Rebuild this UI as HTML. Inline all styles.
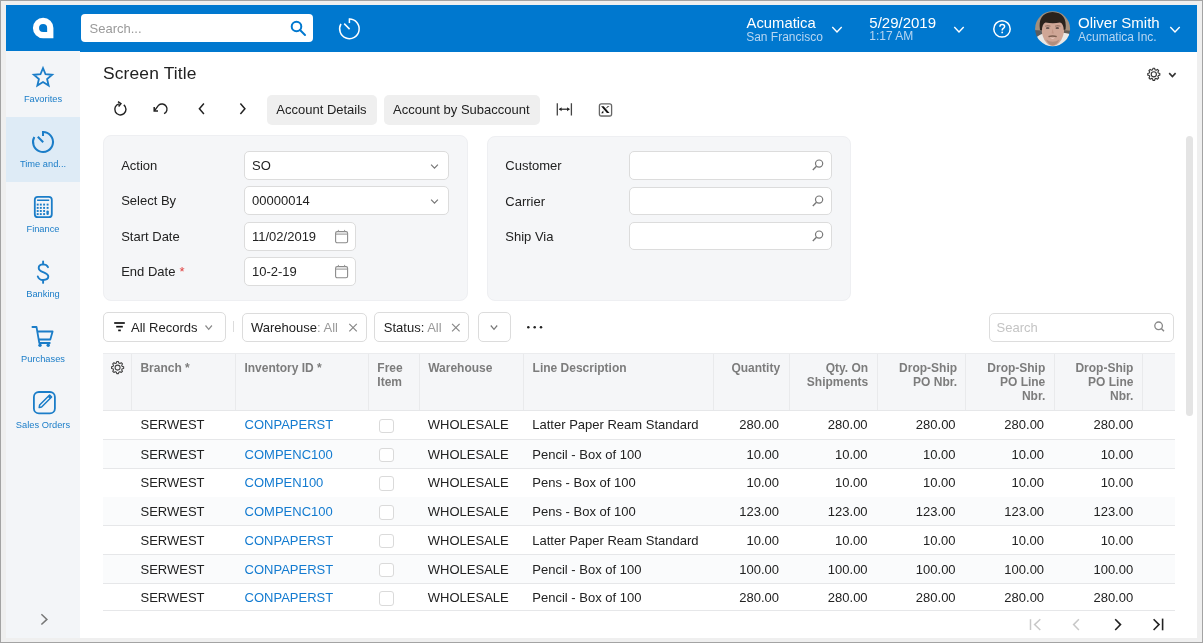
<!DOCTYPE html>
<html><head><meta charset="utf-8">
<style>
*{box-sizing:border-box;margin:0;padding:0}
html,body{width:1203px;height:643px;overflow:hidden;background:#efefef;font-family:"Liberation Sans",sans-serif;color:#222;position:relative;-webkit-font-smoothing:antialiased}
.b{position:absolute}
.s{position:absolute;overflow:visible}
.t{position:absolute;white-space:nowrap}
#w{position:absolute;left:0;top:0;width:1203px;height:643px;will-change:transform}
</style></head><body><div id="w">
<div class="b" style="left:0.00px;top:0.00px;width:1203.00px;height:1.00px;background:#a3a3a3"></div>
<div class="b" style="left:0.00px;top:0.00px;width:1.00px;height:643.00px;background:#a3a3a3"></div>
<div class="b" style="left:1202.00px;top:0.00px;width:1.00px;height:643.00px;background:#a3a3a3"></div>
<div class="b" style="left:0.00px;top:642.00px;width:1203.00px;height:1.00px;background:#a3a3a3"></div>
<div class="b" style="left:6.00px;top:5.00px;width:1191.00px;height:633.00px;background:#fff"></div>
<div class="b" style="left:6.00px;top:5.00px;width:1191.00px;height:46.50px;background:#0078cf"></div>
<svg class="s" style="left:30.00px;top:15.00px;" width="26" height="26" viewBox="0 0 26 26"><path d="M13.15 2.85 A10.25 10.25 0 0 0 2.9 13.1 A10.25 10.25 0 0 0 13.15 23.35 L23.4 23.35 L23.4 13.1 A10.25 10.25 0 0 0 13.15 2.85 Z M13.1 9 A4.05 4.05 0 0 0 9.05 13.05 A4.05 4.05 0 0 0 13.1 17.1 L17.15 17.1 L17.15 13.05 A4.05 4.05 0 0 0 13.1 9 Z" fill="#fff" fill-rule="evenodd"/></svg>
<div class="b" style="left:80.50px;top:14.20px;width:232.50px;height:28.30px;background:#fff;border-radius:4px"></div>
<div class="t" style="left:89.50px;top:22px;font-size:13px;line-height:13px;color:#9a9a9a;">Search...</div>
<svg class="s" style="left:286.00px;top:17.00px;" width="24" height="24" viewBox="0 0 24 24"><circle cx="10.5" cy="9.5" r="4.8" fill="none" stroke="#0078cf" stroke-width="2"/><path d="M14 13 L19 18" stroke="#0078cf" stroke-width="2" stroke-linecap="round"/></svg>
<svg class="s" style="left:335.00px;top:15.00px;" width="28" height="28" viewBox="0 0 28 28"><path d="M14.40 4.10 A9.75 9.75 0 1 1 5.96 8.97" fill="none" stroke="#fff" stroke-width="1.5"/><path d="M14.40 3.35 L14.40 8.10" stroke="#fff" stroke-width="1.5"/><path d="M14.60 14.10 L9.20 8.65" stroke="#fff" stroke-width="1.5"/></svg>
<div class="t" style="left:746.60px;top:16px;font-size:14.8px;line-height:14.8px;color:#fff;">Acumatica</div>
<div class="t" style="left:746.20px;top:31px;font-size:12px;line-height:12px;color:#b7d6f2;">San Francisco</div>
<svg class="s" style="left:827.00px;top:20.00px;" width="20" height="20" viewBox="0 0 20 20"><path d="M5.30 7.10 L10.00 12.10 L14.70 7.10" fill="none" stroke="#fff" stroke-width="1.4"/></svg>
<div class="t" style="left:869.30px;top:15px;font-size:15px;line-height:15px;color:#fff;">5/29/2019</div>
<div class="t" style="left:869.30px;top:30px;font-size:12px;line-height:12px;color:#b7d6f2;">1:17 AM</div>
<svg class="s" style="left:949.00px;top:20.00px;" width="20" height="20" viewBox="0 0 20 20"><path d="M5.30 7.10 L10.00 12.10 L14.70 7.10" fill="none" stroke="#fff" stroke-width="1.4"/></svg>
<svg class="s" style="left:990.00px;top:16.00px;" width="24" height="24" viewBox="0 0 24 24"><circle cx="12" cy="12.9" r="8.2" fill="none" stroke="#fff" stroke-width="1.5"/><path d="M9.9 10.7 C9.9 9.2 10.9 8.5 12.2 8.5 C13.6 8.5 14.6 9.3 14.6 10.5 C14.6 11.7 13.7 12.1 13 12.6 C12.4 13.1 12.2 13.5 12.2 14.5" fill="none" stroke="#fff" stroke-width="1.5"/><circle cx="12.2" cy="16.4" r="0.9" fill="#fff"/></svg>
<svg class="s" style="left:1035.00px;top:11.00px;" width="36" height="36" viewBox="0 0 36 36"><defs><clipPath id="av"><circle cx="17.6" cy="17.75" r="17.5"/></clipPath><filter id="bl" x="-20%" y="-20%" width="140%" height="140%"><feGaussianBlur stdDeviation="0.7"/></filter></defs><g clip-path="url(#av)"><g filter="url(#bl)"><rect x="-2" y="-2" width="40" height="40" fill="#a38f7c"/><path d="M-2 19 L7 19.5 L7.5 26 L-2 27 Z" fill="#5a5c5e"/><path d="M28 19 L38 20 L38 24 L28 23.5 Z" fill="#625a52"/><path d="M-2 40 L-2 30 Q2 24.5 8 22.5 L27 21.5 Q33 22 38 24 L38 40 Z" fill="#e9e8e6"/><path d="M7 13 Q8 9.5 17.8 9.5 Q28 9.5 28.8 13 L29 21 Q27.5 30 21.5 34 Q17.8 35.8 14 34 Q8.2 30 6.8 21 Z" fill="#cfa696"/><path d="M10 14.8 Q12.7 13.8 15.5 14.8 L15.5 15.6 Q12.7 14.8 10 15.6 Z M20 14.8 Q22.7 13.8 25.5 14.8 L25.5 15.6 Q22.7 14.8 20 15.6 Z" fill="#7a5a4e" opacity="0.8"/><path d="M5 19 Q2.5 2 17.5 1 Q32.5 1.5 30.5 18.5 L28.8 19 Q28.5 12.5 25 11.5 Q18 13 10.5 11.5 Q7 13 7 19.5 Z" fill="#29221f"/><ellipse cx="12.7" cy="17" rx="1.8" ry="0.85" fill="#4a3a36"/><ellipse cx="22.3" cy="17" rx="1.8" ry="0.85" fill="#4a3a36"/><path d="M17.6 17.5 L16.6 22.5 L18.8 22.5 Z" fill="#c29585"/><path d="M13.2 25 Q17.6 23.4 22 25 L21.4 26.2 Q17.6 25.2 13.8 26.2 Z" fill="#7d5e50"/><path d="M14.6 26.3 Q17.6 27.8 20.6 26.3 Q17.6 29.2 14.6 26.3 Z" fill="#f0d5cc"/><path d="M11 28.5 Q17.6 33 24.5 28.5 Q22 34 17.6 34.5 Q13.5 34 11 28.5 Z" fill="#9a7a6a" opacity="0.55"/></g></g></svg>
<div class="t" style="left:1078.00px;top:15px;font-size:15px;line-height:15px;color:#fff;">Oliver Smith</div>
<div class="t" style="left:1078.00px;top:31px;font-size:12px;line-height:12px;color:#b7d6f2;">Acumatica Inc.</div>
<svg class="s" style="left:1165.00px;top:20.00px;" width="20" height="20" viewBox="0 0 20 20"><path d="M5.30 7.10 L10.00 12.10 L14.70 7.10" fill="none" stroke="#fff" stroke-width="1.4"/></svg>
<div class="b" style="left:6.00px;top:51.00px;width:74.00px;height:587.00px;background:#f3f5f8"></div>
<div class="b" style="left:6.00px;top:117.00px;width:74.00px;height:64.50px;background:#deebf6"></div>
<div class="t" style="left:6.00px;width:74px;text-align:center;top:95px;font-size:9.3px;line-height:9.3px;color:#1b7dc8;">Favorites</div>
<div class="t" style="left:6.00px;width:74px;text-align:center;top:160px;font-size:9.3px;line-height:9.3px;color:#1b7dc8;">Time and...</div>
<div class="t" style="left:6.00px;width:74px;text-align:center;top:225px;font-size:9.3px;line-height:9.3px;color:#1b7dc8;">Finance</div>
<div class="t" style="left:6.00px;width:74px;text-align:center;top:290px;font-size:9.3px;line-height:9.3px;color:#1b7dc8;">Banking</div>
<div class="t" style="left:6.00px;width:74px;text-align:center;top:355px;font-size:9.3px;line-height:9.3px;color:#1b7dc8;">Purchases</div>
<div class="t" style="left:6.00px;width:74px;text-align:center;top:421px;font-size:9.3px;line-height:9.3px;color:#1b7dc8;">Sales Orders</div>
<svg class="s" style="left:30.00px;top:64.00px;" width="26" height="26" viewBox="0 0 26 26"><path d="M13.00 4.10 L15.53 10.22 L22.13 10.73 L17.09 15.03 L18.64 21.47 L13.00 18.00 L7.36 21.47 L8.91 15.03 L3.87 10.73 L10.47 10.22 Z" fill="none" stroke="#1b7dc8" stroke-width="1.8" stroke-linejoin="miter"/></svg>
<svg class="s" style="left:29.00px;top:128.00px;" width="28" height="28" viewBox="0 0 28 28"><path d="M14.00 4.00 A10 10 0 1 1 5.34 9.00" fill="none" stroke="#1b7dc8" stroke-width="2"/><path d="M14.00 3.00 L14.00 8.00" stroke="#1b7dc8" stroke-width="2"/><path d="M14.20 14.25 L8.80 8.80" stroke="#1b7dc8" stroke-width="2"/></svg>
<svg class="s" style="left:30.00px;top:193.00px;" width="26" height="28" viewBox="0 0 26 28"><rect x="4.8" y="3.8" width="17" height="20.4" rx="3" fill="none" stroke="#1b7dc8" stroke-width="1.8"/><rect x="7.1" y="6.5" width="12.1" height="1.5" fill="#1b7dc8"/><rect x="6.75" y="10.65" width="1.9" height="1.9" fill="#1b7dc8"/><rect x="9.85" y="10.65" width="1.9" height="1.9" fill="#1b7dc8"/><rect x="13.15" y="10.65" width="1.9" height="1.9" fill="#1b7dc8"/><rect x="16.65" y="10.65" width="1.9" height="1.9" fill="#1b7dc8"/><rect x="6.75" y="13.95" width="1.9" height="1.9" fill="#1b7dc8"/><rect x="9.85" y="13.95" width="1.9" height="1.9" fill="#1b7dc8"/><rect x="13.15" y="13.95" width="1.9" height="1.9" fill="#1b7dc8"/><rect x="16.65" y="13.95" width="1.9" height="1.9" fill="#1b7dc8"/><rect x="6.75" y="17.05" width="1.9" height="1.9" fill="#1b7dc8"/><rect x="9.85" y="17.05" width="1.9" height="1.9" fill="#1b7dc8"/><rect x="13.15" y="17.05" width="1.9" height="1.9" fill="#1b7dc8"/><rect x="6.75" y="20.15" width="1.9" height="1.9" fill="#1b7dc8"/><rect x="9.85" y="20.15" width="1.9" height="1.9" fill="#1b7dc8"/><rect x="13.15" y="20.15" width="1.9" height="1.9" fill="#1b7dc8"/><rect x="16.4" y="17.4" width="2.4" height="4.6" rx="1.2" fill="#1b7dc8"/></svg>
<svg class="s" style="left:31.00px;top:257.00px;" width="24" height="30" viewBox="0 0 24 30"><path d="M17 10.2 C16 8.2 14.2 7.4 12.1 7.4 C9.4 7.4 7.7 9 7.7 11 C7.7 13.4 9.8 14.2 12.2 15.2 C15 16.3 17.3 17.3 17.3 19.6 C17.3 21.6 15.2 23 12.2 23 C9.6 23 7.6 21.8 6.8 19.5" fill="none" stroke="#1b7dc8" stroke-width="1.9" stroke-linecap="round"/><path d="M12.1 4.4 L12.1 7.4 M12.1 23 L12.1 25.9" stroke="#1b7dc8" stroke-width="1.9" stroke-linecap="round"/></svg>
<svg class="s" style="left:30.00px;top:324.00px;" width="26" height="26" viewBox="0 0 26 26"><path d="M2.4 3 L6.5 3 L9.3 19 L19.8 19" fill="none" stroke="#1b7dc8" stroke-width="1.8" stroke-linejoin="round" stroke-linecap="round"/><path d="M7.3 7.5 L22.6 7.5 L20.3 15.5 L8.6 15.5" fill="none" stroke="#1b7dc8" stroke-width="1.8" stroke-linejoin="round"/><circle cx="10" cy="21.3" r="1.7" fill="#1b7dc8"/><circle cx="18.2" cy="21.3" r="1.7" fill="#1b7dc8"/></svg>
<svg class="s" style="left:30.00px;top:388.00px;" width="28" height="28" viewBox="0 0 28 28"><rect x="3.9" y="4" width="21" height="21.4" rx="5" fill="none" stroke="#1b7dc8" stroke-width="1.8"/><path d="M9.2 19.6 L9.6 17 L19.6 7 L21.6 9 L11.6 19 Z" fill="none" stroke="#1b7dc8" stroke-width="1.5" stroke-linejoin="round"/><path d="M18.6 8 L20.6 10" stroke="#1b7dc8" stroke-width="2.4"/></svg>
<svg class="s" style="left:36.00px;top:610.00px;" width="16" height="18" viewBox="0 0 16 18"><path d="M5.4 4.3 L10.9 9.4 L5.4 14.5" fill="none" stroke="#777" stroke-width="1.5"/></svg>
<div class="t" style="left:103.00px;top:65px;font-size:17.4px;line-height:17.4px;color:#222;letter-spacing:0.15px;">Screen Title</div>
<svg class="s" style="left:1144.00px;top:64.00px;" width="20" height="20" viewBox="0 0 20 20"><path d="M8.58 5.76 L8.95 4.26 L10.65 4.26 L11.02 5.76 L12.15 6.23 L13.47 5.43 L14.67 6.63 L13.87 7.95 L14.34 9.08 L15.84 9.45 L15.84 11.15 L14.34 11.52 L13.87 12.65 L14.67 13.97 L13.47 15.17 L12.15 14.37 L11.02 14.84 L10.65 16.34 L8.95 16.34 L8.58 14.84 L7.45 14.37 L6.13 15.17 L4.93 13.97 L5.73 12.65 L5.26 11.52 L3.76 11.15 L3.76 9.45 L5.26 9.08 L5.73 7.95 L4.93 6.63 L6.13 5.43 L7.45 6.23 Z" fill="none" stroke="#333" stroke-width="1.1" stroke-linejoin="round"/><circle cx="9.8" cy="10.3" r="2.6" fill="none" stroke="#333" stroke-width="1.1"/></svg>
<svg class="s" style="left:1164.00px;top:66.00px;" width="16" height="16" viewBox="0 0 16 16"><path d="M5.20 7.10 L8.40 10.50 L11.60 7.10" fill="none" stroke="#333" stroke-width="1.6"/></svg>
<svg class="s" style="left:110.00px;top:99.00px;" width="20" height="20" viewBox="0 0 20 20"><path d="M13.8 5.9 A5.6 5.6 0 1 1 9 4.9" fill="none" stroke="#222" stroke-width="1.4"/><path d="M8 2.6 L10.9 4.6 L8.6 7.4" fill="none" stroke="#222" stroke-width="1.5"/></svg>
<svg class="s" style="left:150.00px;top:99.00px;" width="20" height="20" viewBox="0 0 20 20"><path d="M14.05 14.7 A5.1 5.1 0 1 0 8.6 6.2 L4.6 11.6" fill="none" stroke="#222" stroke-width="1.4"/><path d="M4.2 8 L4.2 12 L8 12" fill="none" stroke="#222" stroke-width="1.5"/></svg>
<svg class="s" style="left:191.00px;top:99.00px;" width="20" height="20" viewBox="0 0 20 20"><path d="M12.9 4.6 L8.4 9.8 L12.9 15" fill="none" stroke="#222" stroke-width="1.5"/></svg>
<svg class="s" style="left:233.00px;top:99.00px;" width="20" height="20" viewBox="0 0 20 20"><path d="M7.4 4.6 L11.9 9.8 L7.4 15" fill="none" stroke="#222" stroke-width="1.5"/></svg>
<div class="b" style="left:267.00px;top:95.00px;width:109.50px;height:29.80px;background:#efefef;border-radius:5px"></div>
<div class="t" style="left:276.30px;top:103px;font-size:13px;line-height:13px;color:#222;">Account Details</div>
<div class="b" style="left:384.00px;top:95.00px;width:156.00px;height:29.80px;background:#efefef;border-radius:5px"></div>
<div class="t" style="left:393.00px;top:103px;font-size:13px;line-height:13px;color:#222;">Account by Subaccount</div>
<svg class="s" style="left:553.00px;top:100.00px;" width="22" height="20" viewBox="0 0 22 20"><path d="M4.3 3.3 L4.3 15.6 M18.4 3.3 L18.4 15.6" stroke="#444" stroke-width="1.3"/><path d="M6.3 9.2 L16.4 9.2" stroke="#222" stroke-width="1.2"/><path d="M6 9.2 L8.6 7.2 L8.6 11.2 Z M16.7 9.2 L14.1 7.2 L14.1 11.2 Z" fill="#222"/></svg>
<svg class="s" style="left:596.00px;top:100.00px;" width="20" height="20" viewBox="0 0 20 20"><rect x="3.4" y="3.9" width="12.2" height="12.2" rx="2" fill="none" stroke="#666" stroke-width="1.3"/><path d="M3.4 15.6 L15.6 15.6" stroke="#888" stroke-width="0.8"/><path d="M5.1 6.2 L7.7 6.2 L13.5 13 L10.9 13 Z" fill="#111"/><path d="M13.5 6.2 L11.6 6.2 L9.5 8.8 Z M5.1 13.2 L7.4 13.2 L7.3 10.6 Z" fill="#111"/></svg>
<div class="b" style="left:103.00px;top:135.00px;width:365.00px;height:166.00px;background:#f5f6f8;border:1px solid #eeeff2;border-radius:8px"></div>
<div class="b" style="left:487.00px;top:135.50px;width:364.00px;height:165.50px;background:#f5f6f8;border:1px solid #eeeff2;border-radius:8px"></div>
<div class="t" style="left:121.20px;top:159px;font-size:13px;line-height:13px;color:#222;">Action</div>
<div class="b" style="left:244.00px;top:150.50px;width:204.80px;height:29.00px;background:#fff;border:1px solid #dcdcdc;border-radius:5px"></div>
<svg class="s" style="left:424.00px;top:156.50px;" width="20" height="16" viewBox="0 0 20 16"><path d="M7.10 7.60 L10.50 11.20 L13.90 7.60" fill="none" stroke="#777" stroke-width="1.2"/></svg>
<div class="t" style="left:252.00px;top:159px;font-size:13px;line-height:13px;color:#222;">SO</div>
<div class="t" style="left:121.20px;top:194px;font-size:13px;line-height:13px;color:#222;">Select By</div>
<div class="b" style="left:244.00px;top:186.00px;width:204.80px;height:29.00px;background:#fff;border:1px solid #dcdcdc;border-radius:5px"></div>
<svg class="s" style="left:424.00px;top:192.00px;" width="20" height="16" viewBox="0 0 20 16"><path d="M7.10 7.60 L10.50 11.20 L13.90 7.60" fill="none" stroke="#777" stroke-width="1.2"/></svg>
<div class="t" style="left:252.00px;top:194px;font-size:13px;line-height:13px;color:#222;">00000014</div>
<div class="t" style="left:121.20px;top:230px;font-size:13px;line-height:13px;color:#222;">Start Date</div>
<div class="b" style="left:244.00px;top:221.50px;width:112.20px;height:29.00px;background:#fff;border:1px solid #dcdcdc;border-radius:5px"></div>
<svg class="s" style="left:331.00px;top:227.50px;" width="20" height="18" viewBox="0 0 20 18"><rect x="4.6" y="3.6" width="12" height="11.2" rx="1.6" fill="none" stroke="#8a8a8a" stroke-width="1.1"/><path d="M4.6 6.1 L16.6 6.1" stroke="#999" stroke-width="1.1"/><path d="M7.4 1.9 L7.4 3.6 M13.6 1.9 L13.6 3.6" stroke="#999" stroke-width="1"/></svg>
<div class="t" style="left:252.00px;top:230px;font-size:13px;line-height:13px;color:#222;">11/02/2019</div>
<div class="t" style="left:121.20px;top:265px;font-size:13px;line-height:13px;color:#222;">End Date</div>
<div class="b" style="left:244.00px;top:257.00px;width:112.20px;height:29.00px;background:#fff;border:1px solid #dcdcdc;border-radius:5px"></div>
<svg class="s" style="left:331.00px;top:263.00px;" width="20" height="18" viewBox="0 0 20 18"><rect x="4.6" y="3.6" width="12" height="11.2" rx="1.6" fill="none" stroke="#8a8a8a" stroke-width="1.1"/><path d="M4.6 6.1 L16.6 6.1" stroke="#999" stroke-width="1.1"/><path d="M7.4 1.9 L7.4 3.6 M13.6 1.9 L13.6 3.6" stroke="#999" stroke-width="1"/></svg>
<div class="t" style="left:252.00px;top:265px;font-size:13px;line-height:13px;color:#222;">10-2-19</div>
<div class="t" style="left:179.50px;top:265px;font-size:13px;line-height:13px;color:#e04040;">*</div>
<div class="t" style="left:505.30px;top:159px;font-size:13px;line-height:13px;color:#222;">Customer</div>
<div class="b" style="left:628.50px;top:151.20px;width:203.80px;height:28.60px;background:#fff;border:1px solid #dcdcdc;border-radius:5px"></div>
<svg class="s" style="left:808.00px;top:155.20px;" width="20" height="20" viewBox="0 0 20 20"><circle cx="11.1" cy="8.6" r="3.6" fill="none" stroke="#777" stroke-width="1.2"/><path d="M8.5 11.3 L4.8 15" stroke="#777" stroke-width="1.4"/></svg>
<div class="t" style="left:505.30px;top:195px;font-size:13px;line-height:13px;color:#222;">Carrier</div>
<div class="b" style="left:628.50px;top:186.90px;width:203.80px;height:28.60px;background:#fff;border:1px solid #dcdcdc;border-radius:5px"></div>
<svg class="s" style="left:808.00px;top:190.90px;" width="20" height="20" viewBox="0 0 20 20"><circle cx="11.1" cy="8.6" r="3.6" fill="none" stroke="#777" stroke-width="1.2"/><path d="M8.5 11.3 L4.8 15" stroke="#777" stroke-width="1.4"/></svg>
<div class="t" style="left:505.30px;top:230px;font-size:13px;line-height:13px;color:#222;">Ship Via</div>
<div class="b" style="left:628.50px;top:221.60px;width:203.80px;height:28.60px;background:#fff;border:1px solid #dcdcdc;border-radius:5px"></div>
<svg class="s" style="left:808.00px;top:225.60px;" width="20" height="20" viewBox="0 0 20 20"><circle cx="11.1" cy="8.6" r="3.6" fill="none" stroke="#777" stroke-width="1.2"/><path d="M8.5 11.3 L4.8 15" stroke="#777" stroke-width="1.4"/></svg>
<div class="b" style="left:103.00px;top:312.30px;width:122.50px;height:29.70px;background:#fff;border:1px solid #dcdcdc;border-radius:5px"></div>
<svg class="s" style="left:110.00px;top:317.00px;" width="20" height="20" viewBox="0 0 20 20"><path d="M4.2 6 L14.8 6" stroke="#111" stroke-width="1.7"/><path d="M6.2 9.7 L12.8 9.7" stroke="#111" stroke-width="1.7"/><path d="M8.2 13.4 L10.8 13.4" stroke="#111" stroke-width="1.7"/></svg>
<div class="t" style="left:131.00px;top:321px;font-size:13px;line-height:13px;color:#222;">All Records</div>
<svg class="s" style="left:199.00px;top:318.00px;" width="20" height="16" viewBox="0 0 20 16"><path d="M6.50 7.50 L9.70 11.30 L12.90 7.50" fill="none" stroke="#888" stroke-width="1.2"/></svg>
<div class="b" style="left:233.00px;top:321.00px;width:1.00px;height:11.30px;background:#dcdcdc"></div>
<div class="b" style="left:242.00px;top:312.50px;width:124.70px;height:29.70px;background:#fff;border:1px solid #dcdcdc;border-radius:5px"></div>
<div class="t" style="left:251.00px;top:321px;font-size:13px;line-height:13px;color:#222;">Warehouse<span style="color:#999">: All</span></div>
<svg class="s" style="left:343.00px;top:317.00px;" width="20" height="20" viewBox="0 0 20 20"><path d="M6.3 6.8 L13.8 14.3 M13.8 6.8 L6.3 14.3" stroke="#888" stroke-width="1.2"/></svg>
<div class="b" style="left:374.30px;top:312.40px;width:95.20px;height:29.70px;background:#fff;border:1px solid #dcdcdc;border-radius:5px"></div>
<div class="t" style="left:383.80px;top:321px;font-size:13px;line-height:13px;color:#222;">Status: <span style="color:#999">All</span></div>
<svg class="s" style="left:446.00px;top:317.00px;" width="20" height="20" viewBox="0 0 20 20"><path d="M6.1 6.8 L13.6 14.3 M13.6 6.8 L6.1 14.3" stroke="#888" stroke-width="1.2"/></svg>
<div class="b" style="left:477.50px;top:312.40px;width:33.30px;height:29.70px;background:#fff;border:1px solid #dcdcdc;border-radius:5px"></div>
<svg class="s" style="left:484.00px;top:318.00px;" width="20" height="16" viewBox="0 0 20 16"><path d="M6.80 7.50 L10.00 11.30 L13.20 7.50" fill="none" stroke="#777" stroke-width="1.2"/></svg>
<svg class="s" style="left:524.00px;top:320.00px;" width="22" height="14" viewBox="0 0 22 14"><circle cx="4.3" cy="7.3" r="1.25" fill="#222"/><circle cx="10.7" cy="7.3" r="1.25" fill="#222"/><circle cx="17" cy="7.3" r="1.25" fill="#222"/></svg>
<div class="b" style="left:989.00px;top:312.70px;width:185.30px;height:28.90px;background:#fff;border:1px solid #dddddd;border-radius:5px"></div>
<div class="t" style="left:996.50px;top:321px;font-size:13px;line-height:13px;color:#c4c4c4;">Search</div>
<svg class="s" style="left:1149.00px;top:316.00px;" width="20" height="20" viewBox="0 0 20 20"><circle cx="9.6" cy="9.8" r="3.8" fill="none" stroke="#888" stroke-width="1.3"/><path d="M12.3 12.5 L15 15.2" stroke="#888" stroke-width="1.5"/></svg>
<div class="b" style="left:1186.00px;top:135.60px;width:7.00px;height:280.60px;background:#e4e4e4;border-radius:3.5px"></div>
<div class="b" style="left:103.00px;top:353.00px;width:1072.00px;height:57.50px;background:#f5f6f8;border-top:1px solid #ebecee;border-bottom:1px solid #e6e7e9"></div>
<div class="b" style="left:130.90px;top:353.50px;width:1.00px;height:56.50px;background:#e9eaec"></div>
<div class="b" style="left:235.30px;top:353.50px;width:1.00px;height:56.50px;background:#e9eaec"></div>
<div class="b" style="left:367.70px;top:353.50px;width:1.00px;height:56.50px;background:#e9eaec"></div>
<div class="b" style="left:419.00px;top:353.50px;width:1.00px;height:56.50px;background:#e9eaec"></div>
<div class="b" style="left:523.30px;top:353.50px;width:1.00px;height:56.50px;background:#e9eaec"></div>
<div class="b" style="left:712.80px;top:353.50px;width:1.00px;height:56.50px;background:#e9eaec"></div>
<div class="b" style="left:788.90px;top:353.50px;width:1.00px;height:56.50px;background:#e9eaec"></div>
<div class="b" style="left:877.10px;top:353.50px;width:1.00px;height:56.50px;background:#e9eaec"></div>
<div class="b" style="left:965.40px;top:353.50px;width:1.00px;height:56.50px;background:#e9eaec"></div>
<div class="b" style="left:1053.80px;top:353.50px;width:1.00px;height:56.50px;background:#e9eaec"></div>
<div class="b" style="left:1142.00px;top:353.50px;width:1.00px;height:56.50px;background:#e9eaec"></div>
<svg class="s" style="left:108.00px;top:358.00px;" width="20" height="20" viewBox="0 0 20 20"><path d="M8.38 5.06 L8.75 3.56 L10.45 3.56 L10.82 5.06 L11.95 5.53 L13.27 4.73 L14.47 5.93 L13.67 7.25 L14.14 8.38 L15.64 8.75 L15.64 10.45 L14.14 10.82 L13.67 11.95 L14.47 13.27 L13.27 14.47 L11.95 13.67 L10.82 14.14 L10.45 15.64 L8.75 15.64 L8.38 14.14 L7.25 13.67 L5.93 14.47 L4.73 13.27 L5.53 11.95 L5.06 10.82 L3.56 10.45 L3.56 8.75 L5.06 8.38 L5.53 7.25 L4.73 5.93 L5.93 4.73 L7.25 5.53 Z" fill="none" stroke="#444" stroke-width="1.1" stroke-linejoin="round"/><circle cx="9.6" cy="9.6" r="2.5" fill="none" stroke="#444" stroke-width="1.1"/></svg>
<div class="t" style="left:140.40px;top:362px;font-size:12px;line-height:12px;color:#7c7c7c;font-weight:bold;">Branch *</div>
<div class="t" style="left:244.40px;top:362px;font-size:12px;line-height:12px;color:#7c7c7c;font-weight:bold;">Inventory ID *</div>
<div class="t" style="left:377.30px;top:362px;font-size:12px;line-height:12px;color:#7c7c7c;font-weight:bold;">Free</div>
<div class="t" style="left:377.30px;top:376px;font-size:12px;line-height:12px;color:#7c7c7c;font-weight:bold;">Item</div>
<div class="t" style="left:428.20px;top:362px;font-size:12px;line-height:12px;color:#7c7c7c;font-weight:bold;">Warehouse</div>
<div class="t" style="left:532.60px;top:362px;font-size:12px;line-height:12px;color:#7c7c7c;font-weight:bold;">Line Description</div>
<div class="t" style="left:380.10px;width:400px;text-align:right;top:362px;font-size:12px;line-height:12px;color:#7c7c7c;font-weight:bold;">Quantity</div>
<div class="t" style="left:468.20px;width:400px;text-align:right;top:362px;font-size:12px;line-height:12px;color:#7c7c7c;font-weight:bold;">Qty. On</div>
<div class="t" style="left:468.20px;width:400px;text-align:right;top:376px;font-size:12px;line-height:12px;color:#7c7c7c;font-weight:bold;">Shipments</div>
<div class="t" style="left:557.10px;width:400px;text-align:right;top:362px;font-size:12px;line-height:12px;color:#7c7c7c;font-weight:bold;">Drop-Ship</div>
<div class="t" style="left:557.10px;width:400px;text-align:right;top:376px;font-size:12px;line-height:12px;color:#7c7c7c;font-weight:bold;">PO Nbr.</div>
<div class="t" style="left:645.30px;width:400px;text-align:right;top:362px;font-size:12px;line-height:12px;color:#7c7c7c;font-weight:bold;">Drop-Ship</div>
<div class="t" style="left:645.30px;width:400px;text-align:right;top:376px;font-size:12px;line-height:12px;color:#7c7c7c;font-weight:bold;">PO Line</div>
<div class="t" style="left:645.30px;width:400px;text-align:right;top:390px;font-size:12px;line-height:12px;color:#7c7c7c;font-weight:bold;">Nbr.</div>
<div class="t" style="left:733.40px;width:400px;text-align:right;top:362px;font-size:12px;line-height:12px;color:#7c7c7c;font-weight:bold;">Drop-Ship</div>
<div class="t" style="left:733.40px;width:400px;text-align:right;top:376px;font-size:12px;line-height:12px;color:#7c7c7c;font-weight:bold;">PO Line</div>
<div class="t" style="left:733.40px;width:400px;text-align:right;top:390px;font-size:12px;line-height:12px;color:#7c7c7c;font-weight:bold;">Nbr.</div>
<div class="b" style="left:103.00px;top:439.20px;width:1072.00px;height:1.00px;background:#e6e7e9"></div>
<div class="t" style="left:140.50px;top:418px;font-size:13px;line-height:13px;color:#222;">SERWEST</div>
<div class="t" style="left:244.60px;top:418px;font-size:13px;line-height:13px;color:#137bd0;">CONPAPERST</div>
<div class="b" style="left:379.30px;top:418.50px;width:14.50px;height:14.50px;background:#fff;border:1px solid #dadada;border-radius:3px"></div>
<div class="t" style="left:427.80px;top:418px;font-size:13px;line-height:13px;color:#222;">WHOLESALE</div>
<div class="t" style="left:532.30px;top:418px;font-size:13px;line-height:13px;color:#222;">Latter Paper Ream Standard</div>
<div class="t" style="left:379.00px;width:400px;text-align:right;top:418px;font-size:13px;line-height:13px;color:#222;">280.00</div>
<div class="t" style="left:467.60px;width:400px;text-align:right;top:418px;font-size:13px;line-height:13px;color:#222;">280.00</div>
<div class="t" style="left:555.60px;width:400px;text-align:right;top:418px;font-size:13px;line-height:13px;color:#222;">280.00</div>
<div class="t" style="left:644.10px;width:400px;text-align:right;top:418px;font-size:13px;line-height:13px;color:#222;">280.00</div>
<div class="t" style="left:733.20px;width:400px;text-align:right;top:418px;font-size:13px;line-height:13px;color:#222;">280.00</div>
<div class="b" style="left:103.00px;top:439.70px;width:1072.00px;height:28.70px;background:#fafbfc"></div>
<div class="b" style="left:103.00px;top:467.90px;width:1072.00px;height:1.00px;background:#e6e7e9"></div>
<div class="t" style="left:140.50px;top:448px;font-size:13px;line-height:13px;color:#222;">SERWEST</div>
<div class="t" style="left:244.60px;top:448px;font-size:13px;line-height:13px;color:#137bd0;">COMPENC100</div>
<div class="b" style="left:379.30px;top:447.70px;width:14.50px;height:14.50px;background:#fff;border:1px solid #dadada;border-radius:3px"></div>
<div class="t" style="left:427.80px;top:448px;font-size:13px;line-height:13px;color:#222;">WHOLESALE</div>
<div class="t" style="left:532.30px;top:448px;font-size:13px;line-height:13px;color:#222;">Pencil - Box of 100</div>
<div class="t" style="left:379.00px;width:400px;text-align:right;top:448px;font-size:13px;line-height:13px;color:#222;">10.00</div>
<div class="t" style="left:467.60px;width:400px;text-align:right;top:448px;font-size:13px;line-height:13px;color:#222;">10.00</div>
<div class="t" style="left:555.60px;width:400px;text-align:right;top:448px;font-size:13px;line-height:13px;color:#222;">10.00</div>
<div class="t" style="left:644.10px;width:400px;text-align:right;top:448px;font-size:13px;line-height:13px;color:#222;">10.00</div>
<div class="t" style="left:733.20px;width:400px;text-align:right;top:448px;font-size:13px;line-height:13px;color:#222;">10.00</div>
<div class="b" style="left:103.00px;top:496.70px;width:1072.00px;height:1.00px;background:#e6e7e9"></div>
<div class="t" style="left:140.50px;top:476px;font-size:13px;line-height:13px;color:#222;">SERWEST</div>
<div class="t" style="left:244.60px;top:476px;font-size:13px;line-height:13px;color:#137bd0;">COMPEN100</div>
<div class="b" style="left:379.30px;top:476.40px;width:14.50px;height:14.50px;background:#fff;border:1px solid #dadada;border-radius:3px"></div>
<div class="t" style="left:427.80px;top:476px;font-size:13px;line-height:13px;color:#222;">WHOLESALE</div>
<div class="t" style="left:532.30px;top:476px;font-size:13px;line-height:13px;color:#222;">Pens - Box of 100</div>
<div class="t" style="left:379.00px;width:400px;text-align:right;top:476px;font-size:13px;line-height:13px;color:#222;">10.00</div>
<div class="t" style="left:467.60px;width:400px;text-align:right;top:476px;font-size:13px;line-height:13px;color:#222;">10.00</div>
<div class="t" style="left:555.60px;width:400px;text-align:right;top:476px;font-size:13px;line-height:13px;color:#222;">10.00</div>
<div class="t" style="left:644.10px;width:400px;text-align:right;top:476px;font-size:13px;line-height:13px;color:#222;">10.00</div>
<div class="t" style="left:733.20px;width:400px;text-align:right;top:476px;font-size:13px;line-height:13px;color:#222;">10.00</div>
<div class="b" style="left:103.00px;top:497.20px;width:1072.00px;height:28.70px;background:#fafbfc"></div>
<div class="b" style="left:103.00px;top:525.40px;width:1072.00px;height:1.00px;background:#e6e7e9"></div>
<div class="t" style="left:140.50px;top:505px;font-size:13px;line-height:13px;color:#222;">SERWEST</div>
<div class="t" style="left:244.60px;top:505px;font-size:13px;line-height:13px;color:#137bd0;">COMPENC100</div>
<div class="b" style="left:379.30px;top:505.20px;width:14.50px;height:14.50px;background:#fff;border:1px solid #dadada;border-radius:3px"></div>
<div class="t" style="left:427.80px;top:505px;font-size:13px;line-height:13px;color:#222;">WHOLESALE</div>
<div class="t" style="left:532.30px;top:505px;font-size:13px;line-height:13px;color:#222;">Pens - Box of 100</div>
<div class="t" style="left:379.00px;width:400px;text-align:right;top:505px;font-size:13px;line-height:13px;color:#222;">123.00</div>
<div class="t" style="left:467.60px;width:400px;text-align:right;top:505px;font-size:13px;line-height:13px;color:#222;">123.00</div>
<div class="t" style="left:555.60px;width:400px;text-align:right;top:505px;font-size:13px;line-height:13px;color:#222;">123.00</div>
<div class="t" style="left:644.10px;width:400px;text-align:right;top:505px;font-size:13px;line-height:13px;color:#222;">123.00</div>
<div class="t" style="left:733.20px;width:400px;text-align:right;top:505px;font-size:13px;line-height:13px;color:#222;">123.00</div>
<div class="b" style="left:103.00px;top:554.10px;width:1072.00px;height:1.00px;background:#e6e7e9"></div>
<div class="t" style="left:140.50px;top:534px;font-size:13px;line-height:13px;color:#222;">SERWEST</div>
<div class="t" style="left:244.60px;top:534px;font-size:13px;line-height:13px;color:#137bd0;">CONPAPERST</div>
<div class="b" style="left:379.30px;top:533.90px;width:14.50px;height:14.50px;background:#fff;border:1px solid #dadada;border-radius:3px"></div>
<div class="t" style="left:427.80px;top:534px;font-size:13px;line-height:13px;color:#222;">WHOLESALE</div>
<div class="t" style="left:532.30px;top:534px;font-size:13px;line-height:13px;color:#222;">Latter Paper Ream Standard</div>
<div class="t" style="left:379.00px;width:400px;text-align:right;top:534px;font-size:13px;line-height:13px;color:#222;">10.00</div>
<div class="t" style="left:467.60px;width:400px;text-align:right;top:534px;font-size:13px;line-height:13px;color:#222;">10.00</div>
<div class="t" style="left:555.60px;width:400px;text-align:right;top:534px;font-size:13px;line-height:13px;color:#222;">10.00</div>
<div class="t" style="left:644.10px;width:400px;text-align:right;top:534px;font-size:13px;line-height:13px;color:#222;">10.00</div>
<div class="t" style="left:733.20px;width:400px;text-align:right;top:534px;font-size:13px;line-height:13px;color:#222;">10.00</div>
<div class="b" style="left:103.00px;top:554.60px;width:1072.00px;height:28.80px;background:#fafbfc"></div>
<div class="b" style="left:103.00px;top:582.90px;width:1072.00px;height:1.00px;background:#e6e7e9"></div>
<div class="t" style="left:140.50px;top:563px;font-size:13px;line-height:13px;color:#222;">SERWEST</div>
<div class="t" style="left:244.60px;top:563px;font-size:13px;line-height:13px;color:#137bd0;">CONPAPERST</div>
<div class="b" style="left:379.30px;top:562.60px;width:14.50px;height:14.50px;background:#fff;border:1px solid #dadada;border-radius:3px"></div>
<div class="t" style="left:427.80px;top:563px;font-size:13px;line-height:13px;color:#222;">WHOLESALE</div>
<div class="t" style="left:532.30px;top:563px;font-size:13px;line-height:13px;color:#222;">Pencil - Box of 100</div>
<div class="t" style="left:379.00px;width:400px;text-align:right;top:563px;font-size:13px;line-height:13px;color:#222;">100.00</div>
<div class="t" style="left:467.60px;width:400px;text-align:right;top:563px;font-size:13px;line-height:13px;color:#222;">100.00</div>
<div class="t" style="left:555.60px;width:400px;text-align:right;top:563px;font-size:13px;line-height:13px;color:#222;">100.00</div>
<div class="t" style="left:644.10px;width:400px;text-align:right;top:563px;font-size:13px;line-height:13px;color:#222;">100.00</div>
<div class="t" style="left:733.20px;width:400px;text-align:right;top:563px;font-size:13px;line-height:13px;color:#222;">100.00</div>
<div class="b" style="left:103.00px;top:609.80px;width:1072.00px;height:1.00px;background:#e6e7e9"></div>
<div class="t" style="left:140.50px;top:591px;font-size:13px;line-height:13px;color:#222;">SERWEST</div>
<div class="t" style="left:244.60px;top:591px;font-size:13px;line-height:13px;color:#137bd0;">CONPAPERST</div>
<div class="b" style="left:379.30px;top:591.40px;width:14.50px;height:14.50px;background:#fff;border:1px solid #dadada;border-radius:3px"></div>
<div class="t" style="left:427.80px;top:591px;font-size:13px;line-height:13px;color:#222;">WHOLESALE</div>
<div class="t" style="left:532.30px;top:591px;font-size:13px;line-height:13px;color:#222;">Pencil - Box of 100</div>
<div class="t" style="left:379.00px;width:400px;text-align:right;top:591px;font-size:13px;line-height:13px;color:#222;">280.00</div>
<div class="t" style="left:467.60px;width:400px;text-align:right;top:591px;font-size:13px;line-height:13px;color:#222;">280.00</div>
<div class="t" style="left:555.60px;width:400px;text-align:right;top:591px;font-size:13px;line-height:13px;color:#222;">280.00</div>
<div class="t" style="left:644.10px;width:400px;text-align:right;top:591px;font-size:13px;line-height:13px;color:#222;">280.00</div>
<div class="t" style="left:733.20px;width:400px;text-align:right;top:591px;font-size:13px;line-height:13px;color:#222;">280.00</div>
<svg class="s" style="left:1024.00px;top:614.00px;" width="22" height="22" viewBox="0 0 22 22"><path d="M6.5 5.2 L6.5 16" stroke="#c8c8c8" stroke-width="1.5"/><path d="M16.3 5.2 L10.6 10.6 L16.3 16" fill="none" stroke="#c8c8c8" stroke-width="1.5"/></svg>
<svg class="s" style="left:1066.00px;top:614.00px;" width="22" height="22" viewBox="0 0 22 22"><path d="M12.9 5.2 L7.6 10.6 L12.9 16" fill="none" stroke="#c8c8c8" stroke-width="1.5"/></svg>
<svg class="s" style="left:1108.00px;top:614.00px;" width="22" height="22" viewBox="0 0 22 22"><path d="M7.2 5.2 L12.5 10.6 L7.2 16" fill="none" stroke="#222" stroke-width="1.6"/></svg>
<svg class="s" style="left:1148.00px;top:614.00px;" width="22" height="22" viewBox="0 0 22 22"><path d="M5.6 5.2 L11 10.6 L5.6 16" fill="none" stroke="#222" stroke-width="1.6"/><path d="M14.6 4.6 L14.6 16.3" stroke="#222" stroke-width="1.6"/></svg>
</div></body></html>
